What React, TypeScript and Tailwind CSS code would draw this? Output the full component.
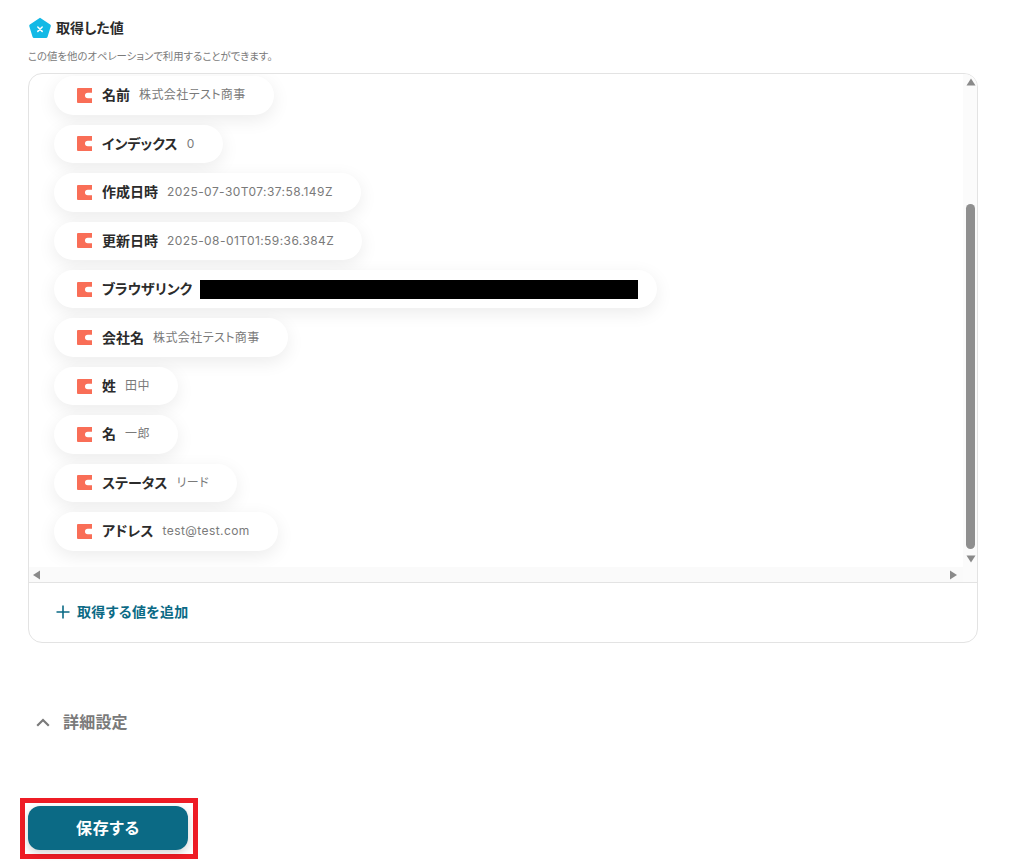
const F = '[font-family:Inter,"Noto_Sans_CJK_JP",sans-serif] [font-feature-settings:"palt"]';

const rows: [string, string, boolean?][] = [
  ["名前", "株式会社テスト商事"],
  ["インデックス", "0"],
  ["作成日時", "2025-07-30T07:37:58.149Z"],
  ["更新日時", "2025-08-01T01:59:36.384Z"],
  ["ブラウザリンク", "", true],
  ["会社名", "株式会社テスト商事"],
  ["姓", "田中"],
  ["名", "一郎"],
  ["ステータス", "リード"],
  ["アドレス", "test@test.com"],
];

function PillIcon() {
  return (
    <svg width="15" height="15" viewBox="0 0 15 15" className="shrink-0">
      <path d="M1 0H15V4.7H10.8A2.8 2.8 0 0 0 10.8 10.3H15V15H1A1 1 0 0 1 0 14V1A1 1 0 0 1 1 0Z" fill="#f96e57" />
    </svg>
  );
}

function Pill({ label, value, redacted }: { label: string; value: string; redacted?: boolean }) {
  return (
    <div className="flex h-[38.44px] w-fit items-center rounded-full bg-white pl-[23px] pr-[28px] shadow-[0_5px_18px_rgba(0,0,0,0.08)]">
      <PillIcon />
      <span className="ml-[10px] text-[14px] font-bold leading-none text-[#2b2b2b]">{label}</span>
      {redacted ? (
        <span className="-mr-[9px] ml-[8px] h-[19px] w-[438px] bg-black" />
      ) : (
        <span className="ml-[9px] text-[12px] leading-none tracking-[0.42px] text-[#7a7a7a]">{value}</span>
      )}
    </div>
  );
}

export default function App() {
  return (
    <div className={`${F} h-[862px] w-[1023px] overflow-hidden bg-white`}>
      <div className="flex h-[52px] flex-col pl-[28px] pt-[17px]">
        <div className="flex items-center">
          <svg width="24" height="22" viewBox="0 0 24 22" className="shrink-0">
            <path d="M12 0.8 22.2 7.6a1.5 1.5 0 0 1 .6 1.7l-3.3 10.6a1.5 1.5 0 0 1-1.4 1.1H6a1.5 1.5 0 0 1-1.4-1.1L1.3 9.3a1.5 1.5 0 0 1 .6-1.7Z" fill="#13b9e6" />
            <path d="M9.8 10 14.2 14.4M14.2 10 9.8 14.4" stroke="#fff" strokeWidth="1.5" strokeLinecap="round" />
          </svg>
          <span className="ml-[4px] text-[14px] font-bold leading-[20px] text-[#2b2b2b]">取得した値</span>
        </div>
      </div>
      <p className="ml-[28px] h-[21px] text-[10.4px] leading-[10px] text-[#7a7a7a]">この値を他のオペレーションで利用することができます。</p>

      <div className="ml-[28px] flex h-[570px] w-[950px] flex-col overflow-hidden rounded-[14px] border border-[#e3e3e3]">
        <div className="flex h-[508px] shrink-0">
          <div className="flex min-w-0 flex-1 flex-col">
            <div className="flex h-[493px] flex-col gap-[10px] overflow-hidden pl-[25px] pt-[2.2px]">
              {rows.map(([l, v, r]) => (
                <Pill key={l} label={l} value={v} redacted={r} />
              ))}
            </div>
            <div className="flex h-[15px] items-center justify-between bg-[#fafafa] px-[3px] pr-[5px]">
              <svg width="9" height="10" viewBox="0 0 9 10"><path d="M8 0.5V9.5L1 5Z" fill="#8a8a8a" /></svg>
              <svg width="9" height="10" viewBox="0 0 9 10"><path d="M1 0.5V9.5L8 5Z" fill="#8a8a8a" /></svg>
            </div>
          </div>
          <div className="flex w-[14px] shrink-0 flex-col items-center bg-[#fbfbfb] pl-[1px] pt-[4px]">
            <svg width="10" height="8" viewBox="0 0 10 8" className="shrink-0"><path d="M0.5 7.5H9.5L5 0.5Z" fill="#8a8a8a" /></svg>
            <div className="mt-[118px] h-[345px] w-[9px] shrink-0 rounded-full bg-[#8f8f8f]" />
            <svg width="10" height="8" viewBox="0 0 10 8" className="mt-[6px] shrink-0"><path d="M0.5 0.5H9.5L5 7.5Z" fill="#8a8a8a" /></svg>
          </div>
        </div>
        <div className="flex flex-1 items-center border-t border-[#e3e3e3] pb-[2px] pl-[27px]">
          <svg width="14" height="14" viewBox="0 0 14 14" className="shrink-0">
            <path d="M7 0.5V13.5M0.5 7H13.5" stroke="#0b6a85" strokeWidth="1.6" />
          </svg>
          <span className="ml-[7px] text-[14px] font-bold leading-none tracking-[0.35px] text-[#0b6a85]">取得する値を追加</span>
        </div>
      </div>

      <div className="ml-[36px] mt-[68px] flex h-[22px] items-center">
        <svg width="14" height="9" viewBox="0 0 14 9" className="shrink-0">
          <path d="M1.2 7.8 7 2 12.8 7.8" fill="none" stroke="#7a7a7a" strokeWidth="2.2" />
        </svg>
        <span className="ml-[13px] text-[16px] font-bold leading-none tracking-[0.2px] text-[#7a7a7a]">詳細設定</span>
      </div>

      <div className="ml-[20px] mt-[65px] h-[61px] w-[178px] border-[5px] border-[#ee1c25] pl-[3px] pt-[3px]">
        <button className="flex h-[44px] w-[160px] items-center justify-center rounded-[12px] bg-[#0b6a85] text-[16px] font-bold leading-none tracking-[0.7px] text-white shadow-[0_3px_8px_rgba(0,0,0,0.18)]">
          保存する
        </button>
      </div>
    </div>
  );
}
